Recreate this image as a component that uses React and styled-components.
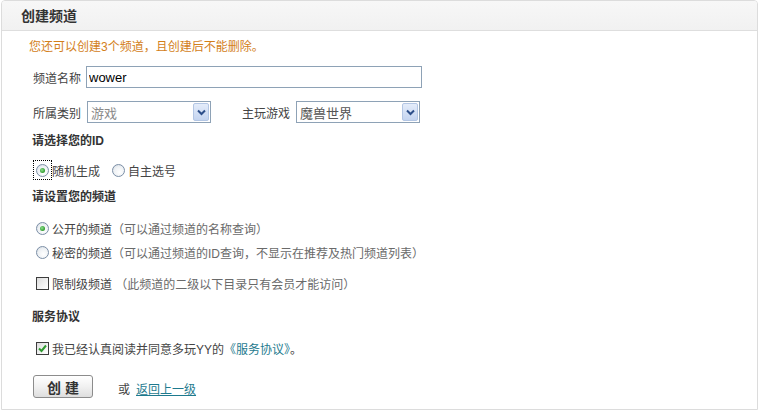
import React from "react";
import styled, { createGlobalStyle } from "styled-components";

const GlobalStyle = createGlobalStyle`
  body {
    margin: 0;
    background: #fff;
    font-family: "Liberation Sans", "Noto Sans CJK SC", sans-serif;
    font-size: 12px;
    color: #444;
  }
`;

const Panel = styled.div`
  box-sizing: border-box;
  width: 757px;
  height: 410px;
  margin-left: 1px;
  border: 1px solid #dcdcdc;
  border-radius: 4px 4px 0 0;
  background: #fff;
  overflow: hidden;
`;

const Header = styled.div`
  height: 29px;
  border-bottom: 1px solid #dedede;
  background: linear-gradient(180deg, #f7f7f7 0%, #f1f1f1 100%);
  padding-left: 19px;
  display: flex;
  align-items: center;
`;

const Title = styled.h2`
  margin: 0;
  font-size: 14px;
  font-weight: bold;
  color: #333;
  line-height: 16px;
`;

const Body = styled.div`
  padding: 6px 0 0 27px;
`;

const Notice = styled.div`
  line-height: 20px;
  color: #d3801a;
`;

const FieldRow = styled.div`
  display: flex;
  align-items: center;
  height: 22px;
  margin-top: ${(p) => p.$top}px;
`;

const Label = styled.label`
  width: 52px;
  text-align: right;
  margin-right: ${(p) => (p.$tight ? 6 : 5)}px;
  margin-left: ${(p) => p.$indent || 0}px;
  color: #444;
  white-space: nowrap;
`;

const TextInput = styled.input`
  box-sizing: border-box;
  width: 336px;
  height: 22px;
  border: 1px solid #8ea2b6;
  padding: 0 2px;
  font-family: "Liberation Sans", Arial, sans-serif;
  font-size: 13px;
  color: #000;
  outline: none;
`;

const SelectBox = styled.div`
  box-sizing: border-box;
  width: 124px;
  height: 22px;
  border: 1px solid #8ea2b6;
  display: flex;
  align-items: center;
  justify-content: space-between;
  padding: 0 1px 0 3px;
  font-size: 13px;
  color: ${(p) => (p.$muted ? "#8a8a8a" : "#555")};
`;

const ArrowButton = styled.span`
  box-sizing: border-box;
  width: 16px;
  height: 18px;
  border: 1px solid #b3c6e4;
  border-radius: 2px;
  background: linear-gradient(180deg, #e4ecfa 0%, #c4d4f0 100%);
  display: flex;
  align-items: center;
  justify-content: center;
`;

const SectionTitle = styled.div`
  margin-top: ${(p) => p.$top}px;
  padding-left: 3px;
  line-height: 18px;
  font-weight: bold;
  color: #333;
`;

const OptionRow = styled.div`
  display: flex;
  align-items: center;
  height: 20px;
  margin-top: ${(p) => p.$top}px;
  padding-left: 4px;
`;

const MarkWrap = styled.span`
  box-sizing: border-box;
  width: 19px;
  height: 20px;
  display: flex;
  align-items: center;
  justify-content: center;
  border: 1px dotted ${(p) => (p.$focused ? "#000" : "transparent")};
`;

const RadioCircle = styled.span`
  box-sizing: border-box;
  width: 13px;
  height: 13px;
  border-radius: 50%;
  border: 1px solid #7b8ea6;
  background: radial-gradient(circle at 60% 65%, #ffffff 0%, #eef1f4 55%, #cfd6de 100%);
  display: flex;
  align-items: center;
  justify-content: center;
  &::after {
    content: "";
    width: 5px;
    height: 5px;
    border-radius: 50%;
    background: ${(p) =>
      p.$checked ? "radial-gradient(circle at 40% 40%, #8de08d 0%, #2f9a2f 70%)" : "transparent"};
  }
`;

const CheckSquare = styled.span`
  box-sizing: border-box;
  width: 13px;
  height: 13px;
  border: 1px solid #3c3c3c;
  background: linear-gradient(135deg, #dcdcdc 0%, #f6f6f6 70%, #fff 100%);
  display: flex;
  align-items: center;
  justify-content: center;
`;

const OptionText = styled.span`
  color: #444;
  white-space: nowrap;
  margin-right: ${(p) => p.$gap || 0}px;
`;

const Hint = styled.span`
  color: #6a6a6a;
  white-space: nowrap;
`;

const Link = styled.a`
  color: #1e7a8e;
  text-decoration: ${(p) => (p.$underline ? "underline" : "none")};
  cursor: pointer;
`;

const ActionRow = styled.div`
  display: flex;
  align-items: center;
  margin-top: 17px;
  padding-left: 4px;
`;

const CreateButton = styled.button`
  box-sizing: border-box;
  width: 60px;
  height: 23px;
  border: 1px solid #8c8c8c;
  border-radius: 3px;
  background: linear-gradient(180deg, #ffffff 0%, #f1f1f1 50%, #dedede 100%);
  font-family: "Liberation Sans", "Noto Sans CJK SC", sans-serif;
  font-size: 14px;
  font-weight: bold;
  color: #333;
  letter-spacing: 4px;
  padding: 0 0 0 4px;
  cursor: pointer;
`;

const OrText = styled.span`
  margin: 4px 6px 0 25px;
  color: #444;
`;

const BackLink = styled(Link)`
  margin-top: 4px;
`;

const Chevron = () => (
  <svg width="9" height="7" viewBox="0 0 9 7">
    <path d="M1 1.5 L4.5 5 L8 1.5" fill="none" stroke="#2d4f8a" strokeWidth="2" />
  </svg>
);

const Tick = () => (
  <svg width="11" height="11" viewBox="0 0 11 11">
    <path d="M2 5.5 L4.5 8 L9 2.5" fill="none" stroke="#2f9a2f" strokeWidth="2" />
  </svg>
);

function Radio({ checked, focused }) {
  return (
    <MarkWrap $focused={focused}>
      <RadioCircle $checked={checked} />
    </MarkWrap>
  );
}

function Checkbox({ checked }) {
  return (
    <MarkWrap>
      <CheckSquare>{checked && <Tick />}</CheckSquare>
    </MarkWrap>
  );
}

export default function App() {
  return (
    <>
      <GlobalStyle />
      <Panel>
        <Header>
          <Title>创建频道</Title>
        </Header>
        <Body>
          <Notice>您还可以创建3个频道，且创建后不能删除。</Notice>

          <FieldRow $top={9}>
            <Label>频道名称</Label>
            <TextInput defaultValue="wower" />
          </FieldRow>

          <FieldRow $top={13}>
            <Label $tight>所属类别</Label>
            <SelectBox $muted>
              游戏
              <ArrowButton>
                <Chevron />
              </ArrowButton>
            </SelectBox>
            <Label $tight $indent={27}>主玩游戏</Label>
            <SelectBox>
              魔兽世界
              <ArrowButton>
                <Chevron />
              </ArrowButton>
            </SelectBox>
          </FieldRow>

          <SectionTitle $top={9}>请选择您的ID</SectionTitle>
          <OptionRow $top={10}>
            <Radio checked focused />
            <OptionText $gap={9}>随机生成</OptionText>
            <Radio />
            <OptionText>自主选号</OptionText>
          </OptionRow>

          <SectionTitle $top={8}>请设置您的频道</SectionTitle>
          <OptionRow $top={12}>
            <Radio checked />
            <OptionText>公开的频道</OptionText>
            <Hint>（可以通过频道的名称查询）</Hint>
          </OptionRow>
          <OptionRow $top={4}>
            <Radio />
            <OptionText>秘密的频道</OptionText>
            <Hint>（可以通过频道的ID查询，不显示在推荐及热门频道列表）</Hint>
          </OptionRow>
          <OptionRow $top={11}>
            <Checkbox />
            <OptionText>限制级频道</OptionText>
            <Hint>&nbsp;（此频道的二级以下目录只有会员才能访问）</Hint>
          </OptionRow>

          <SectionTitle $top={15}>服务协议</SectionTitle>
          <OptionRow $top={12}>
            <Checkbox checked />
            <OptionText>
              我已经认真阅读并同意多玩YY的<Link>《服务协议》</Link>。
            </OptionText>
          </OptionRow>

          <ActionRow>
            <CreateButton>创建</CreateButton>
            <OrText>或</OrText>
            <BackLink $underline>返回上一级</BackLink>
          </ActionRow>
        </Body>
      </Panel>
    </>
  );
}
